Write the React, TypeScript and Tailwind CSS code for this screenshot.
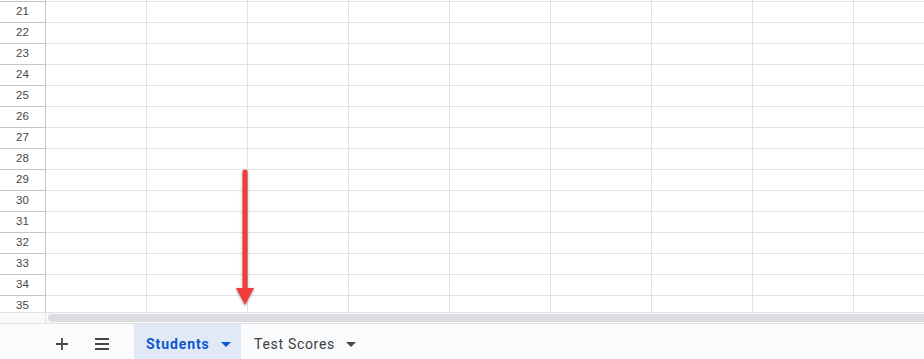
import React from "react";

const rows = Array.from({ length: 15 }, (_, i) => 21 + i);
const cols = Array.from({ length: 9 }, (_, i) => i);

function Caret({ className = "" }: { className?: string }) {
  return (
    <svg width="10" height="5" viewBox="0 0 10 5" className={className}>
      <path d="M0 0h10L5 5z" fill="currentColor" />
    </svg>
  );
}

function Arrow() {
  return (
    <svg
      className="absolute left-[230px] top-[165px] pointer-events-none"
      width="30"
      height="148"
      viewBox="0 0 30 148"
      style={{ filter: "drop-shadow(0 1px 1.5px rgba(0,0,0,0.35))" }}
    >
      <line
        x1="15"
        y1="7"
        x2="15"
        y2="128"
        stroke="#f03c3c"
        strokeWidth="5"
        strokeLinecap="round"
      />
      <path d="M6 123h18l-9 17z" fill="#f03c3c" />
    </svg>
  );
}

export default function App() {
  return (
    <div className="w-[924px] h-[359px] overflow-hidden bg-white flex flex-col relative font-['Roboto',_'Liberation_Sans',_sans-serif]">
      {/* grid */}
      <div className="h-[312px] overflow-hidden">
        <div className="flex h-[2px]">
          <div className="w-[46px] shrink-0 border-r border-b border-[#c7c7c7]" />
          {cols.map((c) => (
            <div key={c} className="w-[101px] shrink-0 border-r border-b border-[#e2e2e2]" />
          ))}
        </div>
        {rows.map((r) => (
          <div key={r} className="flex h-[21px]">
            <div className="w-[46px] shrink-0 border-r border-b border-[#c7c7c7] flex items-center justify-center text-[11.5px] text-[#444746] font-['Liberation_Sans',_sans-serif]">
              {r}
            </div>
            {cols.map((c) => (
              <div
                key={c}
                className="w-[101px] shrink-0 border-r border-b border-[#e2e2e2]"
              />
            ))}
          </div>
        ))}
      </div>

      {/* scrollbar */}
      <div className="h-[12px] flex border-t border-[#e2e2e2] border-b border-b-[#e3e3e3]">
        <div className="w-[46px] shrink-0 bg-[#f8f9fa] border-r border-[#e2e2e2]" />
        <div className="flex-1 pl-[2px] py-[1px] bg-[#f8f9fa]">
          <div className="h-full rounded-l-full bg-[#dadce0]" />
        </div>
      </div>

      {/* sheet tabs */}
      <div className="flex-1 bg-[#f9fbfd] flex items-stretch">
        <div className="w-[46px] shrink-0" />
        <button className="w-[32px] pt-[5px] flex items-center justify-center text-[#444746]">
          <svg width="12" height="12" viewBox="0 0 12 12">
            <path d="M6 0v12M0 6h12" stroke="currentColor" strokeWidth="1.8" />
          </svg>
        </button>
        <button className="w-[48px] pt-[5px] flex items-center justify-center text-[#444746]">
          <svg width="14" height="12" viewBox="0 0 14 12">
            <path d="M0 1h14M0 6h14M0 11h14" stroke="currentColor" strokeWidth="1.8" />
          </svg>
        </button>
        <div className="w-[8px]" />
        <div className="w-[107px] pt-[5px] bg-[#e1e9f7] flex items-center pl-[12px] gap-[11px] text-[#0b57d0]">
          <span className="text-[14px] font-bold tracking-[0.9px]">Students</span>
          <Caret />
        </div>
        <div className="flex items-center pt-[5px] pl-[13px] gap-[11px] text-[#3c4043]">
          <span className="text-[14px] font-normal tracking-[0.7px]">Test Scores</span>
          <Caret className="text-[#444746]" />
        </div>
      </div>

      <Arrow />
    </div>
  );
}
